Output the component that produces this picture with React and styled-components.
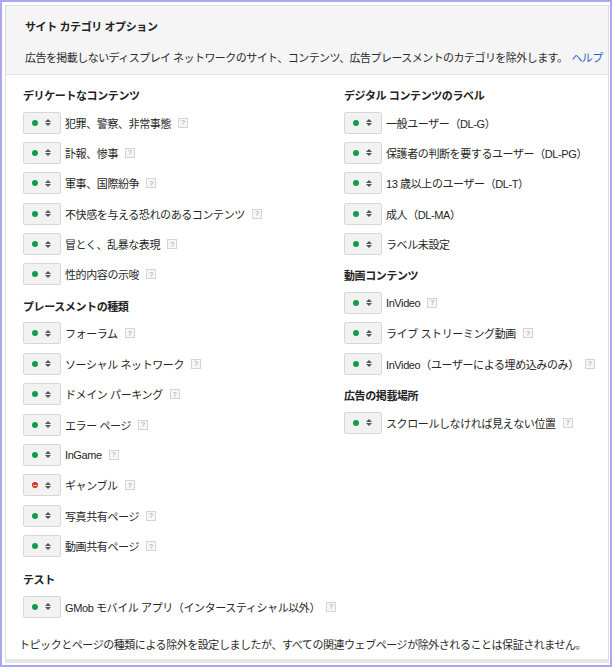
import React from "react";
import styled, { createGlobalStyle } from "styled-components";

const GlobalStyle = createGlobalStyle`
  html, body {
    margin: 0;
    padding: 0;
    background: #fff;
  }
  body {
    font-family: "Liberation Sans", "Noto Sans CJK JP", sans-serif;
    color: #222;
  }
`;

const Frame = styled.div`
  box-sizing: border-box;
  width: 612px;
  height: 667px;
  border: 2px solid #a8a8f2;
  padding: 3px 1px 2px 3px;
  display: flex;
  flex-direction: column;
`;

const Panel = styled.div`
  flex: 1;
  border: 1px solid #dcdcdc;
  border-bottom: 4px solid #e6e6e6;
  display: flex;
  flex-direction: column;
`;

const Header = styled.div`
  background: #f5f5f5;
  border-bottom: 1px solid #e3e3e3;
  padding: 13px 0 0 19px;
  height: 55px;
`;

const Title = styled.div`
  font-size: 11px;
  font-weight: bold;
  letter-spacing: -0.4px;
  line-height: 16px;
  color: #222;
`;

const Desc = styled.div`
  margin-top: 15px;
  font-size: 11px;
  letter-spacing: -0.55px;
  line-height: 16px;
  color: #2a2a2a;
  white-space: nowrap;
`;

const HelpLink = styled.a`
  color: #1a62c9;
  text-decoration: none;
  margin-left: 4px;
`;

const Body = styled.div`
  padding: 13px 0 0 17px;
`;

const Columns = styled.div`
  display: grid;
  grid-template-columns: 321px 1fr;
`;

const Column = styled.div`
  display: flex;
  flex-direction: column;
`;

const Section = styled.div`
  & + & {
    margin-top: 5px;
  }
`;

const Heading = styled.div`
  font-size: 11px;
  font-weight: bold;
  letter-spacing: -0.4px;
  line-height: 16px;
  color: #222;
  margin-bottom: 7.5px;
`;

const Row = styled.div`
  display: flex;
  align-items: center;
  height: 22px;
  margin-bottom: 8.4px;
`;

const Select = styled.div`
  box-sizing: border-box;
  width: 38px;
  height: 22px;
  border: 1px solid #d8d8d8;
  border-radius: 2px;
  background: #f2f2f2;
  display: flex;
  align-items: center;
  padding-left: 8px;
  gap: 7px;
  flex-shrink: 0;
`;

const Dot = styled.span`
  position: relative;
  width: 6px;
  height: 6px;
  border-radius: 50%;
  background: ${(p) => (p.$excluded ? "#d93025" : "#139a50")};
  ${(p) =>
    p.$excluded &&
    `&::after {
      content: "";
      position: absolute;
      left: 1px;
      right: 1px;
      top: 2.5px;
      height: 1px;
      background: #f6c6c2;
    }`}
`;

const Arrows = styled.span`
  display: flex;
  flex-direction: column;
  gap: 1px;
  &::before,
  &::after {
    content: "";
    width: 0;
    height: 0;
    border-left: 3px solid transparent;
    border-right: 3px solid transparent;
  }
  &::before {
    border-bottom: 3px solid #555;
  }
  &::after {
    border-top: 3px solid #555;
  }
`;

const Label = styled.span`
  margin-left: 4px;
  font-size: 11px;
  letter-spacing: -0.4px;
  color: #262626;
  white-space: nowrap;
`;

const Help = styled.span`
  box-sizing: border-box;
  display: inline-flex;
  align-items: center;
  justify-content: center;
  width: 10px;
  height: 10px;
  margin-left: ${(p) => (p.$wide ? "6px" : "7px")};
  border: 1px solid #d4d4d4;
  background: #f7f7f7;
  color: #9a9a9a;
  font-size: 7px;
  font-family: "Liberation Sans", sans-serif;
  line-height: 1;
`;

const Footer = styled.div`
  margin-top: 19px;
  margin-left: -4px;
  font-size: 11px;
  letter-spacing: -0.45px;
  line-height: 16px;
  color: #2a2a2a;
  white-space: nowrap;
`;

const TestBlock = styled.div`
  margin-top: 7px;
`;

const left = [
  {
    title: "デリケートなコンテンツ",
    items: [
      { label: "犯罪、警察、非常事態", help: true },
      { label: "訃報、惨事", help: true },
      { label: "軍事、国際紛争", help: true },
      { label: "不快感を与える恐れのあるコンテンツ", help: true },
      { label: "冒とく、乱暴な表現", help: true },
      { label: "性的内容の示唆", help: true },
    ],
  },
  {
    title: "プレースメントの種類",
    items: [
      { label: "フォーラム", help: true },
      { label: "ソーシャル ネットワーク", help: true },
      { label: "ドメイン パーキング", help: true },
      { label: "エラー ページ", help: true },
      { label: "InGame", help: true },
      { label: "ギャンブル", help: true, excluded: true },
      { label: "写真共有ページ", help: true },
      { label: "動画共有ページ", help: true },
    ],
  },
  {
    title: "テスト",
    items: [{ label: "GMob モバイル アプリ（インタースティシャル以外）", help: true, wide: true }],
  },
];

const right = [
  {
    title: "デジタル コンテンツのラベル",
    items: [
      { label: "一般ユーザー（DL-G）" },
      { label: "保護者の判断を要するユーザー（DL-PG）" },
      { label: "13 歳以上のユーザー（DL-T）" },
      { label: "成人（DL-MA）" },
      { label: "ラベル未設定" },
    ],
  },
  {
    title: "動画コンテンツ",
    items: [
      { label: "InVideo", help: true },
      { label: "ライブ ストリーミング動画", help: true },
      { label: "InVideo（ユーザーによる埋め込みのみ）", help: true, wide: true },
    ],
  },
  {
    title: "広告の掲載場所",
    items: [{ label: "スクロールしなければ見えない位置", help: true }],
  },
];

const Option = ({ item }) => (
  <Row>
    <Select>
      <Dot $excluded={item.excluded} />
      <Arrows />
    </Select>
    <Label>{item.label}</Label>
    {item.help && <Help $wide={item.wide}>?</Help>}
  </Row>
);

const SectionList = ({ sections }) =>
  sections.map((s) => (
    <Section key={s.title}>
      <Heading>{s.title}</Heading>
      {s.items.map((item) => (
        <Option key={item.label} item={item} />
      ))}
    </Section>
  ));

const App = () => {
  return (
    <Frame>
      <GlobalStyle />
      <Panel>
        <Header>
          <Title>サイト カテゴリ オプション</Title>
          <Desc>
            広告を掲載しないディスプレイ ネットワークのサイト、コンテンツ、広告プレースメントのカテゴリを除外します。
            <HelpLink href="#">ヘルプ</HelpLink>
          </Desc>
        </Header>
        <Body>
          <Columns>
            <Column>
              <SectionList sections={left.slice(0, 2)} />
            </Column>
            <Column>
              <SectionList sections={right} />
            </Column>
          </Columns>
          <TestBlock>
            <SectionList sections={left.slice(2)} />
          </TestBlock>
          <Footer>
            トピックとページの種類による除外を設定しましたが、すべての関連ウェブページが除外されることは保証されません。
          </Footer>
        </Body>
      </Panel>
    </Frame>
  );
};

export default App;
